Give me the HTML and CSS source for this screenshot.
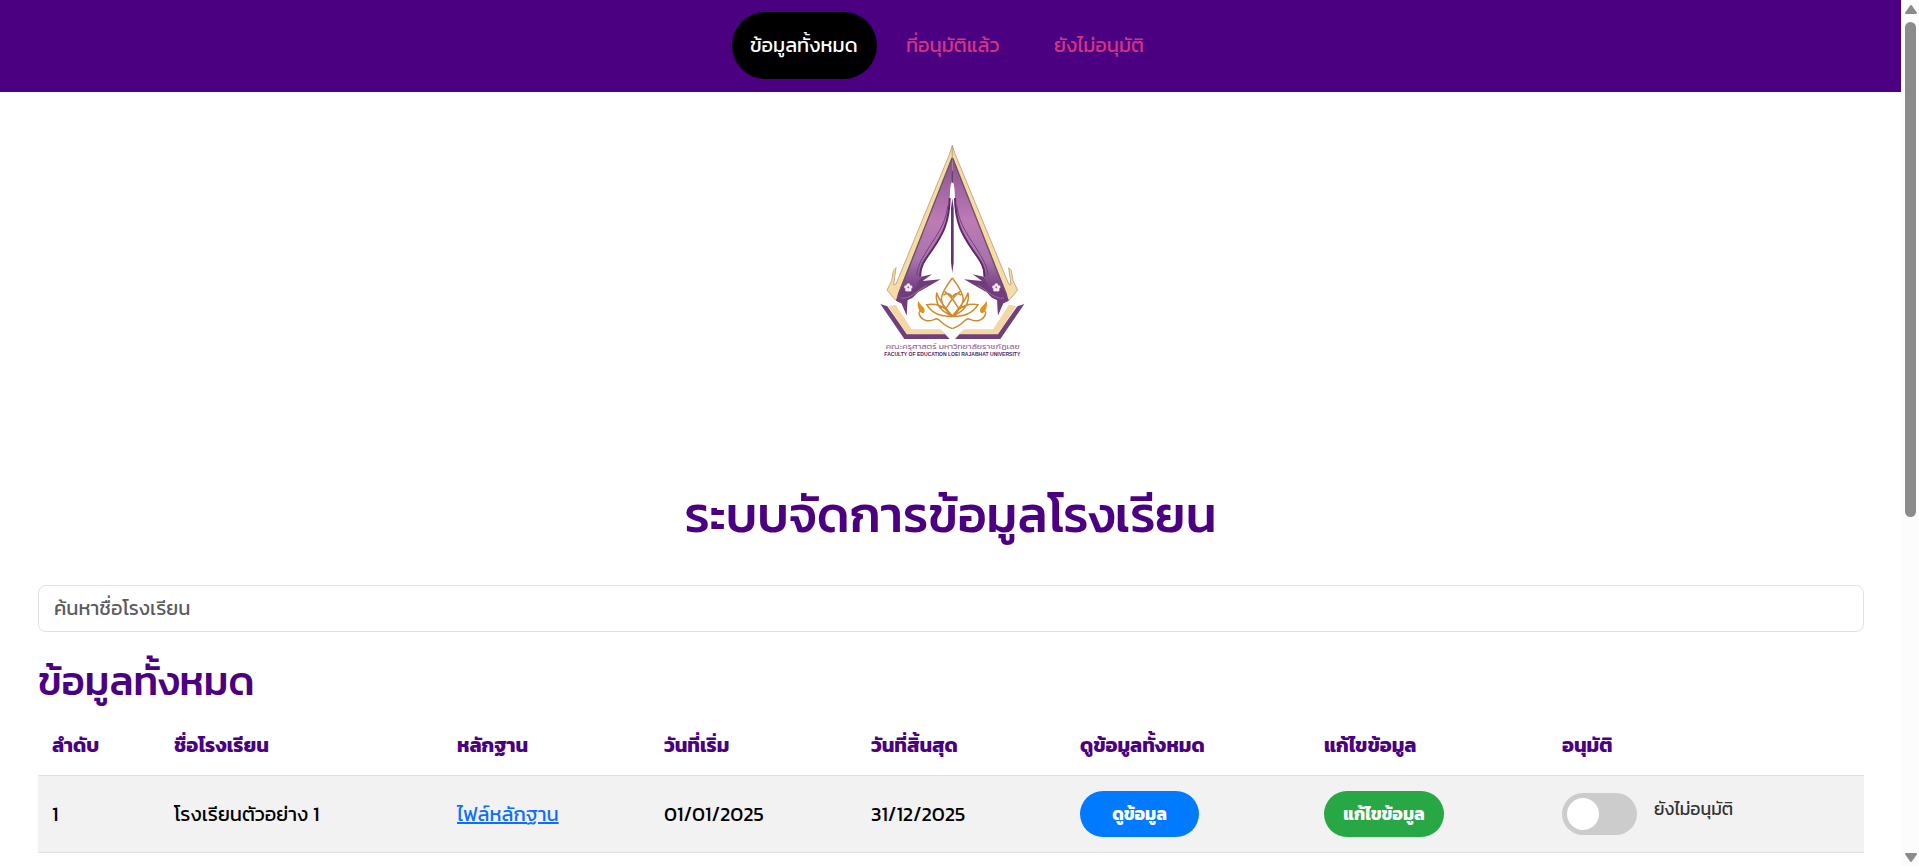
FILE: index.html
```html
<!DOCTYPE html>
<html lang="th">
<head>
<meta charset="utf-8">
<title>ระบบจัดการข้อมูลโรงเรียน</title>
<link rel="stylesheet" href="styles.css">
</head>
<body>
<div class="page">
  <nav class="nav">
    <a class="nav-link active">ข้อมูลทั้งหมด</a>
    <a class="nav-link">ที่อนุมัติแล้ว</a>
    <a class="nav-link">ยังไม่อนุมัติ</a>
  </nav>
  <main class="content">
    <svg class="logo" viewBox="0 0 540 720" aria-label="Faculty of Education">
      <defs>
        <linearGradient id="robe" x1="0" y1="0" x2="0" y2="1">
          <stop offset="0" stop-color="#87518f"/><stop offset=".4" stop-color="#be7bb5"/><stop offset=".65" stop-color="#a873ad"/><stop offset=".85" stop-color="#70397d"/><stop offset="1" stop-color="#8a5b94"/>
        </linearGradient>
        <g id="side">
          <path d="M277 46 L268 74 L108 462 L101 464 L108 413 L100 422 L95 452 L81 480 L106 510 L122 500 L277 84 Z" fill="#f6dba6" stroke="#b99d77" stroke-width="2.5"/>
          <path d="M277 82 L114 490 L108 512 L125 520 L140 556 L142 512 L166 487 L183 440 C180 408 202 385 218 358 C240 325 266 290 269 204 L272 166 L277 150 Z" fill="url(#robe)"/>
          <path d="M276 84 L116 492" fill="none" stroke="#6b5560" stroke-width="4"/>
          <path d="M269 204 C268 280 246 315 220 354 C202 382 178 405 181 440" fill="none" stroke="#5d2869" stroke-width="6"/>
          <path d="M264 226 C256 290 222 325 196 370 C184 390 172 410 170 436" fill="none" stroke="#70407c" stroke-width="3"/>
          <path d="M108 512 C120 488 158 505 174 456 L183 440 L216 433 L188 453 L242 448 L182 482 C164 490 168 502 142 510 L140 556 L124 520 Z" fill="#713c7c"/>
          <path d="M122 504 C150 508 166 486 200 466" fill="none" stroke="#a983b1" stroke-width="2"/>
          <path d="M61 522 L82 529 L139 610 L253 610 L269 627 L133 627 Z" fill="#70407c"/>
          <path d="M85 528 L107 524 L155 598 L242 598 L258 613 L140 613 Z" fill="#f5d7a5"/>
          <g fill="#f7eaf6"><circle cx="145" cy="465" r="5.5"/><circle cx="138" cy="471" r="5.5"/><circle cx="152" cy="471" r="5.5"/><circle cx="141" cy="479" r="5.5"/><circle cx="149" cy="479" r="5.5"/></g>
          <circle cx="145" cy="472" r="2" fill="#8b5c94"/>
          <path d="M175 512 C180 526 194 530 194 541 C194 550 188 552 180 546 C176 538 170 526 175 512 Z" fill="#df941e"/>
          <g fill="none" stroke="#cf8b2c" stroke-width="4.5">
            <path d="M277 444 C258 469 244 490 244 508 C248 536 265 548 277 558 C260 535 240 520 230 488 C224 524 245 546 277 558 C250 525 229 520 200 524 C216 551 247 562 277 558 M254 484 C269 495 284 515 296 535 M250 496 C262 484 272 494 277 500"/>
            <path d="M180 546 C174 542 176 566 200 572 C214 575 222 567 230 566 C242 568 240 582 277 596"/>
          </g>
        </g>
      </defs>
      <use href="#side"/>
      <use href="#side" transform="translate(554 0) scale(-1 1)"/>
      <path d="M277 205 L273 235 L273 398 L277 428 L281 398 L281 235 Z" fill="#633272"/>
      <path d="M277 122 V158" stroke="#62436c" stroke-width="4"/>
      <path d="M277 160 L271 176 V204 H283 V176 Z" fill="#fff"/>
      <text class="logo-thai" x="77" y="658" textLength="402" lengthAdjust="spacingAndGlyphs">คณะครุศาสตร์ มหาวิทยาลัยราชภัฏเลย</text>
      <text class="logo-en" x="73" y="679" textLength="408" lengthAdjust="spacingAndGlyphs">FACULTY OF EDUCATION LOEI RAJABHAT UNIVERSITY</text>
    </svg>
    <h1>ระบบจัดการข้อมูลโรงเรียน</h1>
    <input class="search" type="text" placeholder="ค้นหาชื่อโรงเรียน">
    <h2>ข้อมูลทั้งหมด</h2>
    <table class="schools">
      <colgroup><col class="c1"><col class="c2"><col class="c3"><col class="c4"><col class="c5"><col class="c6"><col class="c7"><col class="c8"></colgroup>
      <thead>
        <tr><th>ลำดับ</th><th>ชื่อโรงเรียน</th><th>หลักฐาน</th><th>วันที่เริ่ม</th><th>วันที่สิ้นสุด</th><th>ดูข้อมูลทั้งหมด</th><th>แก้ไขข้อมูล</th><th>อนุมัติ</th></tr>
      </thead>
      <tbody>
        <tr>
          <td>1</td><td>โรงเรียนตัวอย่าง 1</td><td><a class="file">ไฟล์หลักฐาน</a></td><td>01/01/2025</td><td>31/12/2025</td>
          <td><button class="btn view">ดูข้อมูล</button></td>
          <td><button class="btn edit">แก้ไขข้อมูล</button></td>
          <td><div class="approve"><span class="switch"><span class="knob"></span></span><span class="status">ยังไม่อนุมัติ</span></div></td>
        </tr>
      </tbody>
    </table>
  </main>
</div>
<div class="scrollbar">
  <svg width="12" height="9" viewBox="0 0 12 9"><path d="M6 1 L11 8 H1 Z" fill="#8b8b8b" stroke="#8b8b8b" stroke-width="2" stroke-linejoin="round"/></svg>
  <div class="thumb"></div>
  <svg width="12" height="9" viewBox="0 0 12 9"><path d="M6 8 L11 1 H1 Z" fill="#8b8b8b" stroke="#8b8b8b" stroke-width="2" stroke-linejoin="round"/></svg>
</div>
</body>
</html>
```
FILE: styles.css
```css
* { box-sizing: border-box; }
body {
  margin: 0;
  height: 866px;
  overflow: hidden;
  display: flex;
  background: #fff;
  color: #000;
  font-family: Kanit, "Noto Sans Thai", Roboto, "Noto Sans", sans-serif;
  font-size: 20px;
}
.page { width: 1901px; height: 866px; overflow: hidden; }
.nav {
  height: 92px;
  padding: 12px 0 13px 732px;
  display: flex;
  background: #4b0082;
}
.nav-link {
  height: 67px;
  padding: 0 18px 2px;
  display: flex;
  align-items: center;
  border-radius: 34px;
  color: #d63384;
  white-space: nowrap;
}
.nav-link + .nav-link { margin-left: 11px; }
.nav-link.active { background: #000; color: #fff; width: 145px; }
.nav-link:nth-child(2) { width: 130px; }
.nav-link:nth-child(3) { margin-left: 18px; }
.content { padding: 38px 37px 0 38px; }
.logo { display: block; width: 180px; height: 240px; margin-left: 822px; }
.logo-thai { font-size: 22px; fill: #a06a9a; }
.logo-en { font-size: 14px; font-weight: 700; fill: #4b2767; font-family: "Liberation Sans", sans-serif; }
h1, h2 { margin: 0; color: #4b0082; font-weight: 500; white-space: nowrap; }
h1 { height: 60px; line-height: 60px; margin-top: 115px; padding-right: 1px; font-size: 50px; text-align: center; }
.search {
  display: block;
  width: 100%;
  height: 47px;
  margin-top: 40px;
  padding: 0 14px 1px 15px;
  border: 1px solid #dee2e6;
  border-radius: 8px;
  font: inherit;
}
.search::placeholder { color: #595c5f; opacity: 1; }
h2 { height: 48px; line-height: 48px; margin-top: 25px; font-size: 40px; }
.schools { width: 1826px; margin-top: 10px; table-layout: fixed; border-collapse: collapse; }
.c1 { width: 121px; }
.c2 { width: 283px; }
.c3 { width: 207px; }
.c4 { width: 207px; }
.c5 { width: 209px; }
.c6 { width: 244px; }
.c7 { width: 238px; }
.c8 { width: 317px; }
th, td { padding: 0 15px; text-align: left; white-space: nowrap; border-bottom: 1px solid #dee2e6; }
th:first-child, td:first-child { padding-left: 14px; }
th { height: 60px; color: #4b0082; font-weight: 700; }
td { height: 77px; background: #f2f2f2; }
.file { color: #0d6efd; text-decoration: underline; }
.btn {
  display: block;
  width: 120px;
  height: 46px;
  padding: 0;
  border: 0;
  border-radius: 23px;
  color: #fff;
  font: inherit;
  font-size: 17.6px;
  font-weight: 700;
}
.view { width: 119px; background: #007bff; }
.edit { background: #28a745; }
.approve { display: flex; align-items: center; gap: 17px; }
.switch { width: 75px; height: 42px; padding: 5px; border-radius: 21px; background: #ccc; }
.knob { display: block; width: 32px; height: 32px; border-radius: 50%; background: #fff; }
.status { color: #333; font-size: 17.6px; padding-bottom: 10px; }
.scrollbar {
  width: 18px;
  height: 866px;
  padding: 5px 0 4px 1px;
  display: flex;
  flex-direction: column;
  align-items: center;
  background: #fcfcfc;
}
.thumb { width: 11px; height: 495px; margin: 8px 0 auto; border-radius: 6px; background: #8b8b8b; }
```
